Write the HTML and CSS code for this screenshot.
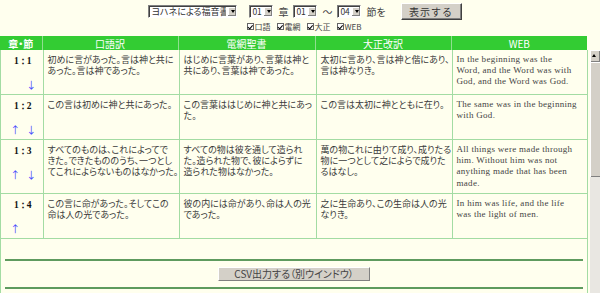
FILE: index.html
```html
<!DOCTYPE html>
<html lang="ja">
<head>
    <meta charset="UTF-8">
    <title>聖書 対照表示</title>
    <link rel="stylesheet" href="styles.css">
</head>
<body>
    <form class="controls">
        <div class="ctl-row">
            <span class="pick book"><select><option>ヨハネによる福音書</option></select></span>
            <span class="pick"><select><option>01</option></select></span>
            <span class="unit">章</span>
            <span class="pick"><select><option>01</option></select></span>
            <span class="unit">〜</span>
            <span class="pick"><select><option>04</option></select></span>
            <span class="unit">節を</span>
            <button type="button" class="show">表示する</button>
        </div>
        <div class="checks">
            <label class="chk"><input type="checkbox" checked>口語</label>
            <label class="chk"><input type="checkbox" checked>電網</label>
            <label class="chk"><input type="checkbox" checked>大正</label>
            <label class="chk"><input type="checkbox" checked>WEB</label>
        </div>
    </form>

    <table class="head">
        <colgroup>
            <col class="c-ref"><col class="c-txt"><col class="c-txt2"><col class="c-txt"><col class="c-web">
        </colgroup>
        <tr>
            <th>章・節</th>
            <th>口語訳</th>
            <th>電網聖書</th>
            <th>大正改訳</th>
            <th>WEB</th>
        </tr>
    </table>

    <div class="frame">
        <div class="viewport">
            <div class="sheet">
                <table class="verses">
                    <colgroup>
                        <col class="c-ref"><col class="c-txt"><col class="c-txt2"><col class="c-txt"><col class="c-web2">
                    </colgroup>
                    <tr>
                        <td class="ref"><b class="num">1：1</b>
                            <div class="nav"><span></span><span>↓</span></div></td>
                        <td class="ja">初めに言があった。言は神と共に<br>あった。言は神であった。</td>
                        <td class="ja">はじめに言葉があり、言葉は神と<br>共にあり、言葉は神であった。</td>
                        <td class="ja">太初に言あり、言は神と偕にあり、<br>言は神なりき。</td>
                        <td class="en">In the beginning was the<br>Word, and the Word was with<br>God, and the Word was God.</td>
                    </tr>
                    <tr>
                        <td class="ref"><b class="num">1：2</b>
                            <div class="nav"><span>↑</span><span>↓</span></div></td>
                        <td class="ja">この言は初めに神と共にあった。</td>
                        <td class="ja">この言葉ははじめに神と共にあっ<br>た。</td>
                        <td class="ja">この言は太初に神とともに在り。</td>
                        <td class="en">The same was in the beginning<br>with God.</td>
                    </tr>
                    <tr>
                        <td class="ref"><b class="num">1：3</b>
                            <div class="nav"><span>↑</span><span>↓</span></div></td>
                        <td class="ja">すべてのものは、これによってで<br>きた。できたもののうち、一つとし<br>てこれによらないものはなかった。</td>
                        <td class="ja">すべての物は彼を通して造られ<br>た。造られた物で、彼によらずに<br>造られた物はなかった。</td>
                        <td class="ja">萬の物これに由りて成り、成りたる<br>物に一つとして之によらで成りた<br>るはなし。</td>
                        <td class="en">All things were made through<br>him. Without him was not<br>anything made that has been<br>made.</td>
                    </tr>
                    <tr>
                        <td class="ref"><b class="num">1：4</b>
                            <div class="nav"><span>↑</span><span></span></div></td>
                        <td class="ja">この言に命があった。そしてこの<br>命は人の光であった。</td>
                        <td class="ja">彼の内には命があり、命は人の光<br>であった。</td>
                        <td class="ja">之に生命あり、この生命は人の光<br>なりき。</td>
                        <td class="en">In him was life, and the life<br>was the light of men.</td>
                    </tr>
                </table>

                <hr class="rule first">
                <div class="csv">
                    <button type="button">CSV出力する（別ウインドウ）</button>
                </div>
                <hr class="rule">
            </div>
        </div>
        <div class="vscroll">
            <span class="sb-up"></span>
            <span class="sb-thumb"></span>
        </div>
    </div>
</body>
</html>
```

FILE: styles.css
```css
body {
    margin: 0;
    background-color: #ffffee;
    font-family: "Noto Sans CJK JP", sans-serif;
    color: #333;
    overflow: hidden;
}
.controls {
    height: 36px;
    padding-top: 2px;
    box-sizing: border-box;
}
.ctl-row {
    display: flex;
    justify-content: center;
    align-items: center;
    gap: 5px;
    height: 18px;
    font-size: 10px;
    color: #444;
    padding-left: 10px;
}
.unit {
    font-feature-settings: "palt";
}
.pick {
    position: relative;
    display: inline-block;
    height: 13px;
}
.pick select {
    -webkit-appearance: none;
    appearance: none;
    display: block;
    width: 24px;
    height: 13px;
    padding: 0 10px 0 2px;
    margin: 0;
    border: 1px solid;
    border-color: #808080 #fff #fff #808080;
    box-shadow: inset 1px 1px #404040;
    border-radius: 0;
    background: #fff;
    font-family: "Noto Sans CJK JP", sans-serif;
    font-size: 8.5px;
    line-height: 11px;
    color: #333;
    outline: none;
}
.pick.book select {
    width: 89px;
    font-size: 9px;
    font-feature-settings: "palt";
}
.book {
    margin-right: 7px;
}
/* arrow button drawn over the right end of the select */
.pick::after {
    content: "";
    position: absolute;
    right: 1px;
    top: 2px;
    width: 8px;
    height: 9px;
    background: #d4d0c8;
    box-shadow: inset -1px -1px #808080, inset 1px 1px #fff;
}
.pick::before {
    content: "";
    position: absolute;
    right: 2.5px;
    top: 5.5px;
    border-left: 2.5px solid transparent;
    border-right: 2.5px solid transparent;
    border-top: 3px solid #000;
    z-index: 1;
}
.show {
    margin-left: 10px;
    width: 61px;
    height: 17px;
    padding: 0;
    background: #d4d0c8;
    border: 1px solid;
    border-color: #fff #404040 #404040 #fff;
    box-shadow: inset -1px -1px #808080;
    font-family: "Noto Sans CJK JP", sans-serif;
    font-size: 10px;
    color: #333;
    letter-spacing: 1px;
}
.checks {
    display: flex;
    justify-content: center;
    gap: 6px;
    margin-top: 2px;
    padding-left: 8px;
    font-size: 8px;
    line-height: 9px;
    color: #444;
}
.chk {
    display: flex;
    align-items: center;
    font-family: "Noto Sans CJK JP", sans-serif;
}
.chk input {
    -webkit-appearance: none;
    appearance: none;
    position: relative;
    width: 7px;
    height: 7px;
    margin: 0 1px 0 0;
    border: 1px solid #666;
    background: #fff;
}
.chk input:checked::after {
    content: "";
    position: absolute;
    left: 1.5px;
    top: -0.5px;
    width: 1.5px;
    height: 3.5px;
    border: solid #000;
    border-width: 0 1.5px 1.5px 0;
    transform: rotate(40deg);
}

table {
    border-collapse: collapse;
    table-layout: fixed;
}
.c-ref { width: 42px; }
.c-txt { width: 136px; }
.c-txt2 { width: 137px; }
.c-web { width: 136px; }
.c-web2 { width: 135px; }

.head {
    width: 587px;
}
.head th {
    height: 14px;
    padding: 0;
    background: #33cc33;
    border-left: 1px solid #8fdf8f;
    color: #fff;
    font-size: 10px;
    line-height: 13px;
    font-weight: normal;
    font-feature-settings: "palt";
}
.head th:first-child {
    border-left: none;
    font-weight: bold;
}

.frame {
    display: flex;
    height: 243px;
}
.viewport {
    width: 590px;
    overflow: hidden;
}
.vscroll {
    width: 10px;
    display: flex;
    flex-direction: column;
    background: #e9e7e2;
}
.sb-up {
    position: relative;
    height: 12px;
    background: #d4d0c8;
    box-shadow: inset 1px 1px #fff, inset -1px -1px #808080;
}
.sb-up::after {
    content: "";
    position: absolute;
    left: 2px;
    top: 4px;
    border-left: 2.5px solid transparent;
    border-right: 2.5px solid transparent;
    border-bottom: 3px solid #000;
}
.sb-thumb {
    height: 115px;
    background: #d4d0c8;
    box-shadow: inset 1px 1px #fff, inset 0 -1px #808080;
}
.sheet {
    width: 586px;
    border-left: 1px solid #a3dca3;
    border-right: 1px solid #a3dca3;
    padding-bottom: 60px;
}
.verses {
    width: 586px;
}
.verses td {
    vertical-align: top;
    padding: 4px 3px 4px 4px;
    border: 1px solid #a3dca3;
    border-top: none;
    font-size: 9px;
    line-height: 11.2px;
}
.verses td:first-child {
    border-left: none;
}
.verses td:last-child {
    border-right: none;
}
.ref {
    text-align: center;
}
.num {
    display: block;
    height: 12px;
    margin-top: 1px;
    line-height: 12px;
    font-family: "Liberation Serif", serif;
    font-size: 9.5px;
    color: #111;
    letter-spacing: -1px;
    font-feature-settings: "palt";
}
.nav {
    display: flex;
    justify-content: center;
    gap: 8px;
    height: 10px;
    margin-top: 13px;
    line-height: 10px;
    font-size: 10px;
    color: #4848ff;
}
.nav span {
    width: 8px;
    text-align: center;
}
.ja {
    white-space: nowrap;
    color: #3a3a3a;
    font-feature-settings: "palt";
}
.en {
    white-space: nowrap;
    font-family: "Liberation Serif", serif;
    font-size: 9.5px;
    letter-spacing: 0.3px;
    color: #444;
}

.rule {
    height: 2px;
    margin: 20px 4px 0;
    border: none;
    background: #5e9b5e;
}
.csv {
    display: flex;
    justify-content: center;
    padding: 6px 0;
}
.csv button {
    width: 152px;
    height: 14px;
    padding: 0;
    background: #d4d0c8;
    border: 1px solid;
    border-color: #fff #808080 #808080 #fff;
    font-family: "Noto Sans CJK JP", sans-serif;
    font-size: 10px;
    line-height: 12px;
    color: #444;
    font-feature-settings: "palt";
}
.rule + .csv + .rule {
    margin-top: 0;
}
```
